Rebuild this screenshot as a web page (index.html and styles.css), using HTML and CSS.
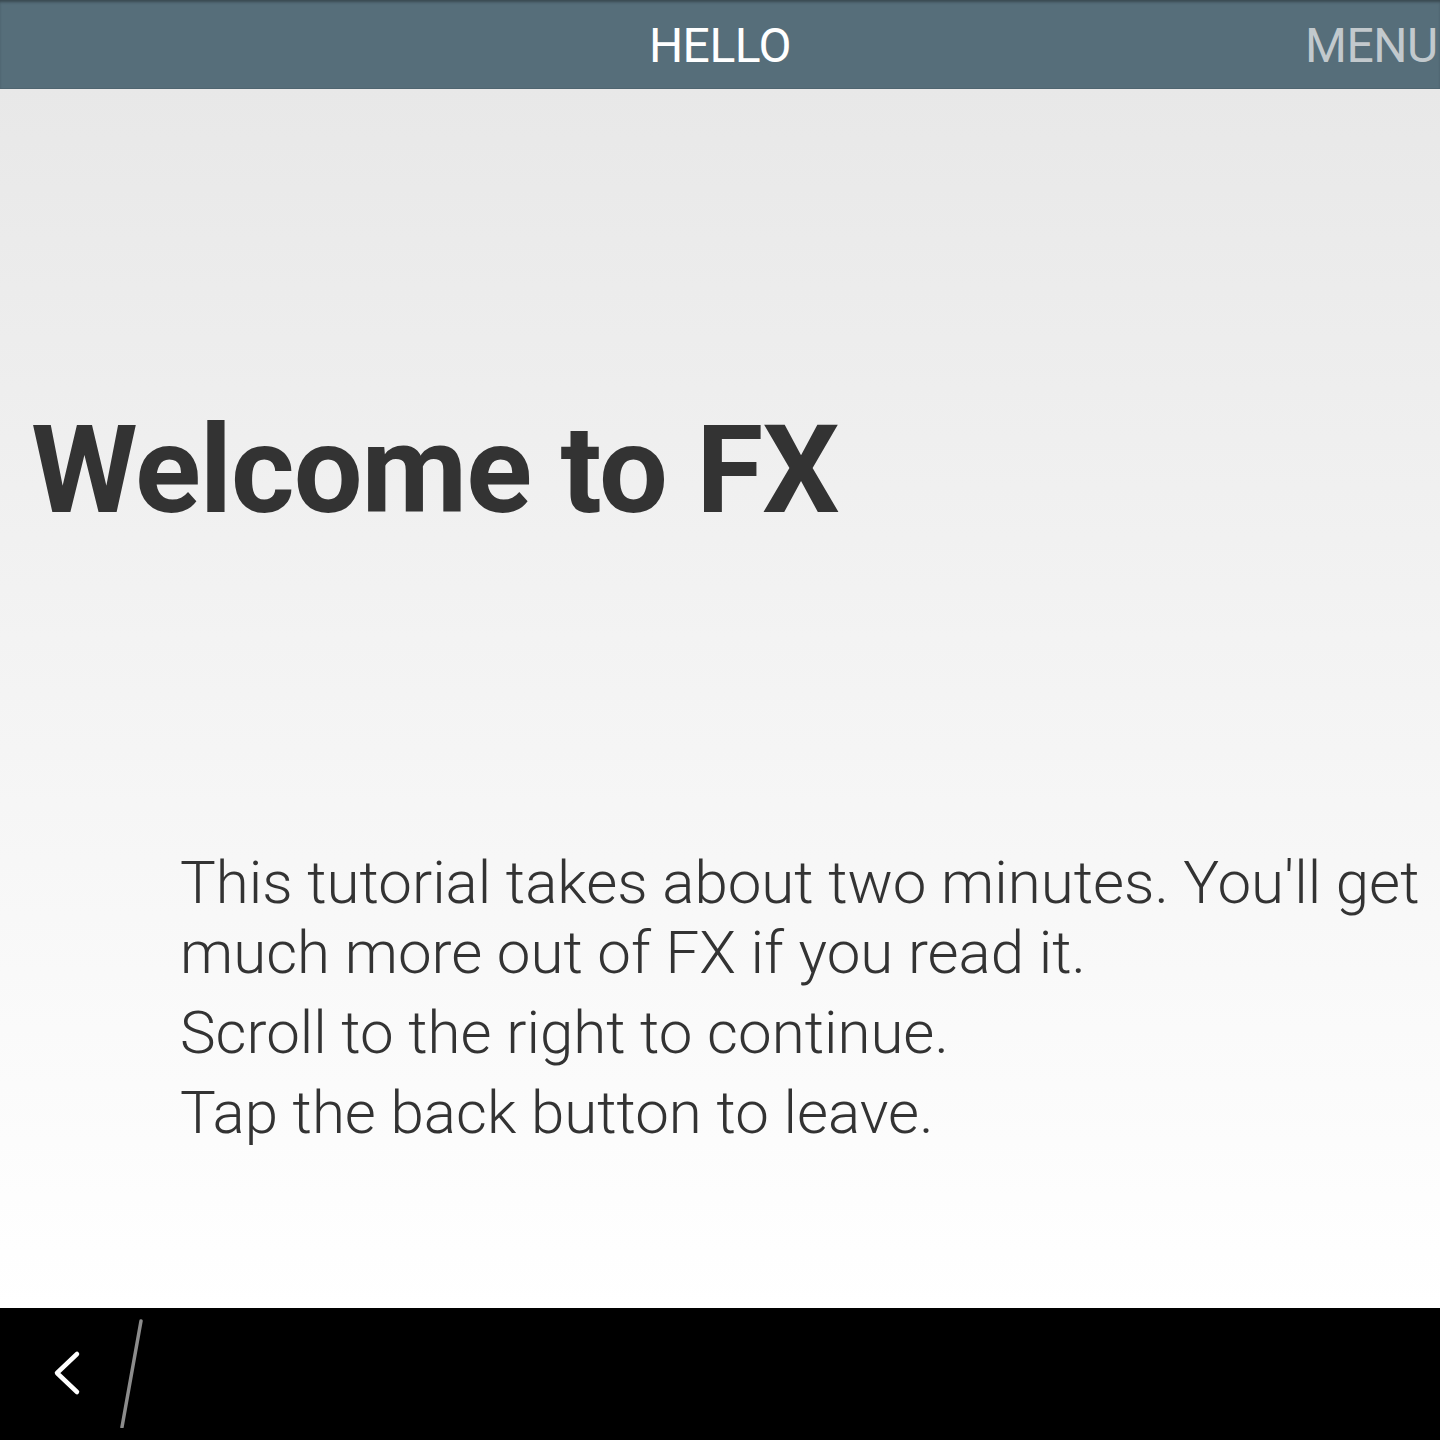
FILE: index.html
```html
<!DOCTYPE html>
<html>
<head>
<meta charset="utf-8">
<link rel="stylesheet" href="styles.css">
</head>
<body>
<div class="app">
  <header class="topbar">
    <div class="title">HELLO</div>
    <div class="menu">MENU</div>
  </header>
  <main class="content">
    <h1 class="welcome">Welcome to FX</h1>
    <div class="body">
      <p>This tutorial takes about two minutes. You'll get much more out of FX if you read it.</p>
      <p>Scroll to the right to continue.</p>
      <p>Tap the back button to leave.</p>
    </div>
  </main>
  <footer class="navbar">
    <svg class="back" width="40" height="60" viewBox="0 0 40 60">
      <polyline points="25,9 5,28 25,47" fill="none" stroke="#fff" stroke-width="4.5" stroke-linecap="round" stroke-linejoin="round"/>
    </svg>
    <svg class="slash" width="40" height="120" viewBox="0 0 40 120">
      <line x1="21" y1="13" x2="2" y2="119" stroke="#8c8c8c" stroke-width="3.5" stroke-linecap="round"/>
    </svg>
  </footer>
</div>
</body>
</html>
```
FILE: styles.css
```css
html, body {
  margin: 0;
  padding: 0;
}
body {
  width: 1440px;
  height: 1440px;
  overflow: hidden;
  font-family: Roboto, "Noto Sans", sans-serif;
}
.app {
  display: flex;
  flex-direction: column;
  height: 1440px;
}
.topbar {
  height: 88px;
  flex: none;
  background: #566e7a;
  box-shadow: inset 0 3px 3px -1px rgba(0,0,0,0.35);
  position: relative;
  display: flex;
  align-items: center;
  justify-content: center;
  border-bottom: 1px solid #4f6570;
}
.title {
  color: #ffffff;
  font-size: 48px;
  font-weight: 400;
  letter-spacing: -0.5px;
  padding-top: 3px;
}
.menu {
  position: absolute;
  left: 1305px;
  top: 0;
  height: 88px;
  display: flex;
  align-items: center;
  padding-top: 3px;
  box-sizing: border-box;
  color: #c2c9cd;
  font-size: 48px;
  font-weight: 400;
  letter-spacing: -0.5px;
  white-space: nowrap;
}
.content {
  flex: 1;
  background: linear-gradient(to bottom, #e8e8e8 0%, #f3f3f3 45%, #ffffff 100%);
  display: flex;
  flex-direction: column;
  overflow: hidden;
}
.welcome {
  margin: 0;
  padding: 307px 0 0 31px;
  font-size: 122px;
  font-weight: 700;
  line-height: 150px;
  color: #333333;
  letter-spacing: -1px;
}
.body {
  padding: 302px 20px 0 180px;
}
.body p {
  margin: 0 0 10px;
  font-size: 60px;
  font-weight: 300;
  line-height: 70px;
  color: #333333;
}
.navbar {
  height: 132px;
  flex: none;
  background: #000;
  display: flex;
  align-items: flex-start;
}
.back {
  margin: 37px 0 0 52px;
}
.slash {
  margin: 0 0 0 28px;
}
```
